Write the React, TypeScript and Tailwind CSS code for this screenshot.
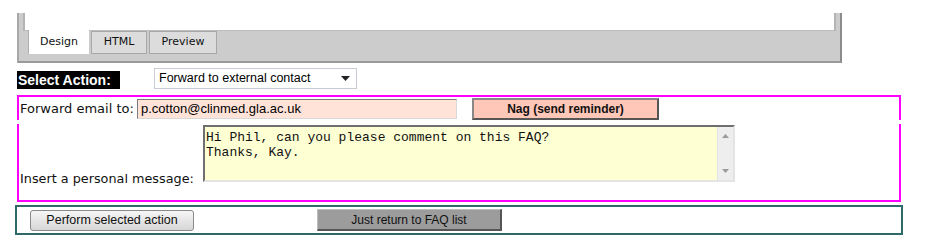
export default function App() {
  const verdana = { fontFamily: '"DejaVu Sans", Verdana, sans-serif' };
  const arial = { fontFamily: '"Liberation Sans", Arial, sans-serif' };

  return (
    <div className="w-[925px] h-[250px] bg-white overflow-hidden pt-[13px]">
      {/* editor tab panel */}
      <div className="ml-[17px] w-[825px] h-[50px] bg-[#cccccc] border-l-2 border-r-2 border-b-2 border-l-[#a8a8a8] border-r-[#8c8c8c] border-b-[#9a9a9a] px-[4px] flex flex-col">
        <div className="h-[18px] bg-white border-l-2 border-r-2 border-b border-[#b4b4b4] border-b-[#bdbdbd]" />
        <div className="flex items-start pl-[5px] gap-[2px]" style={verdana}>
          <div className="w-[61px] h-[24px] -mt-px bg-white border-l border-[#b0b0b0] flex items-center justify-center text-[11px] text-[#111] font-medium">
            Design
          </div>
          <div className="w-[56px] h-[23px] bg-[#dcdcdc] border border-[#a8a8a8] flex items-center justify-center text-[11px] text-[#111] font-medium">
            HTML
          </div>
          <div className="w-[68px] h-[23px] bg-[#dcdcdc] border border-[#a8a8a8] flex items-center justify-center text-[11px] text-[#111] font-medium">
            Preview
          </div>
        </div>
      </div>

      {/* action selector */}
      <div className="flex items-center h-[21px] mt-[5px] ml-[17px]">
        <div
          className="w-[103px] h-[18px] mt-[3px] bg-black text-white font-bold text-[14px] leading-[18px] pl-px"
          style={arial}
        >
          Select Action:
        </div>
        <div
          className="ml-[34px] w-[203px] h-[21px] bg-white border border-[#c8ccd6] flex items-center justify-between pl-[4px] pr-[6px] text-[12.5px] text-black"
          style={arial}
        >
          <span>Forward to external contact</span>
          <svg width="9" height="5" viewBox="0 0 9 5">
            <path d="M0 0h9L4.5 5z" fill="#222" />
          </svg>
        </div>
      </div>

      {/* forward options */}
      <div className="ml-[17px] w-[884px] mt-[6px]">
        <div className="h-[25px] border-t-2 border-l-2 border-r-2 border-[#ff00ff] flex items-center">
          <span className="w-[118px] shrink-0 text-[13px] text-[#111] pl-px mt-px" style={verdana}>
            Forward email to:
          </span>
          <div
            className="mt-px w-[320px] h-[20px] bg-[#ffe3d9] border border-[#7a7a7a] border-r-[#d8d8d8] border-b-[#d8d8d8] pl-[3px] text-[13px] leading-[17px] text-black"
            style={arial}
          >
            p.cotton@clinmed.gla.ac.uk
          </div>
          <button
            className="ml-[15px] w-[187px] h-[22px] bg-[#ffc7b7] border-2 border-[#555] border-t-[#888] border-l-[#888] font-bold text-[12px] text-[#111] flex items-center justify-center"
            style={arial}
          >
            Nag (send reminder)
          </button>
        </div>
        <div className="mt-[4px] h-[78px] border-b-2 border-l-2 border-r-2 border-[#ff00ff] flex items-start pt-px">
          <span className="w-[184px] shrink-0 text-[12.8px] text-[#111] pl-px mt-[44px]" style={verdana}>
            Insert a personal message:
          </span>
          <div className="w-[532px] h-[57px] flex border-2 border-[#6f6f6f] border-r-[#e4e4e4] border-b-[#e4e4e4] bg-[#ffffd4]">
            <div
              className="flex-1 pl-[1px] pt-[3px] text-[13px] leading-[15px] text-[#111] whitespace-pre"
              style={{ fontFamily: '"Liberation Mono", "Courier New", monospace' }}
            >
              {"Hi Phil, can you please comment on this FAQ?\nThanks, Kay."}
            </div>
            <div className="w-[16px] bg-[#eeeeee] border-l border-[#e2e2e2] flex flex-col justify-between items-center py-[7px]">
              <svg width="7" height="4" viewBox="0 0 7 4">
                <path d="M0 4L3.5 0 7 4z" fill="#9a9a9a" />
              </svg>
              <svg width="7" height="4" viewBox="0 0 7 4">
                <path d="M0 0h7L3.5 4z" fill="#9a9a9a" />
              </svg>
            </div>
          </div>
        </div>
      </div>

      {/* bottom actions */}
      <div className="ml-[15px] mt-[3px] w-[888px] h-[30px] border-2 border-[#2f6a6a] flex items-center" style={arial}>
        <button className="ml-[13px] w-[164px] h-[21px] rounded-[3px] border border-[#8a8a8a] bg-gradient-to-b from-[#f6f6f6] to-[#d6d6d6] text-[12.5px] text-[#111] flex items-center justify-center">
          Perform selected action
        </button>
        <button className="ml-[123px] w-[185px] h-[22px] bg-[#9c9c9c] border border-[#bdbdbd] border-r-2 border-b-2 border-r-[#555] border-b-[#555] text-[12px] text-[#111] flex items-center justify-center">
          Just return to FAQ list
        </button>
      </div>
    </div>
  );
}
